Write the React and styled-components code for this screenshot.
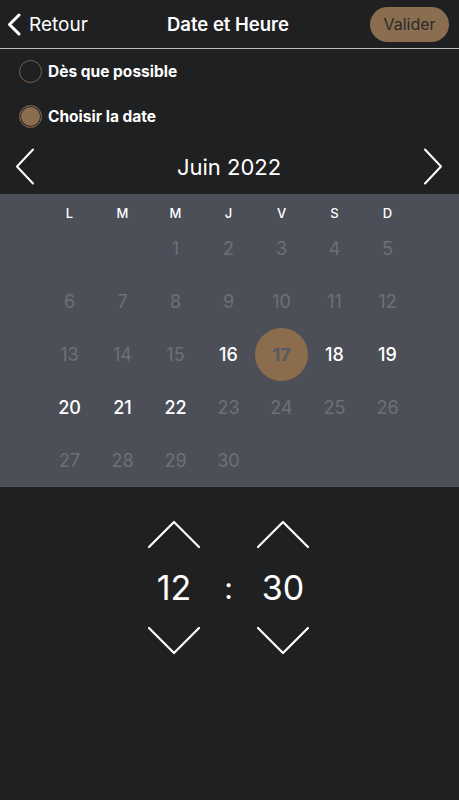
import React from 'react'
import styled, { createGlobalStyle } from 'styled-components'

const GlobalStyle = createGlobalStyle`
  html, body {
    margin: 0;
    padding: 0;
    background: #1f2022;
  }
  body {
    font-family: Inter, "Noto Sans", "Liberation Sans", sans-serif;
    color: #fff;
  }
`

const Screen = styled.div`
  width: 459px;
  height: 800px;
  background: #1f2022;
  display: flex;
  flex-direction: column;
`

const Header = styled.header`
  height: 48px;
  display: grid;
  grid-template-columns: 1fr auto 1fr;
  align-items: center;
  padding: 0 10px 0 7px;
  border-bottom: 1px solid #b9b9bb;
`

const BackButton = styled.div`
  display: flex;
  align-items: center;
  gap: 8px;
  font-size: 19px;
  color: #fff;
`

const Title = styled.h1`
  margin: 0;
  font-size: 18.5px;
  font-weight: 600;
  color: #fff;
`

const ValidateButton = styled.button`
  justify-self: end;
  width: 79px;
  height: 35px;
  padding: 0;
  border: none;
  border-radius: 18px;
  background: #8b6d4f;
  color: #2a2a2a;
  font-family: inherit;
  font-size: 16px;
`

const Options = styled.div`
  display: flex;
  flex-direction: column;
  padding: 0 19px;
`

const OptionRow = styled.label`
  height: 45px;
  display: flex;
  align-items: center;
  gap: 6px;
  font-size: 15.5px;
  font-weight: 700;
  color: #fff;
`

const Radio = styled.span`
  width: 23px;
  height: 23px;
  box-sizing: border-box;
  border-radius: 50%;
  border: 1.5px solid #7d6147;
  background: ${p => (p.$checked ? '#8b6d4f' : 'transparent')};
  box-shadow: ${p => (p.$checked ? 'inset 0 0 0 1px #1f2022' : 'none')};
`

const MonthNav = styled.div`
  height: 55px;
  display: flex;
  align-items: center;
  justify-content: space-between;
  padding: 0 16px 0 15px;
`

const MonthLabel = styled.div`
  font-size: 22px;
  color: #fff;
`

const Calendar = styled.div`
  background: #4c4f57;
  padding: 11px 0 0 43px;
  height: 293px;
  box-sizing: border-box;
`

const Grid = styled.div`
  display: grid;
  grid-template-columns: repeat(7, 53px);
  grid-auto-rows: 53px;
`

const WeekRow = styled.div`
  display: grid;
  grid-template-columns: repeat(7, 53px);
`

const WeekDay = styled.div`
  height: 17px;
  font-size: 13px;
  font-weight: 500;
  color: #fff;
  text-align: center;
  line-height: 17px;
`

const Day = styled.div`
  display: flex;
  align-items: center;
  justify-content: center;
  font-size: 18px;
  color: ${p => (p.$active ? '#ffffff' : '#6d7078')};
  font-weight: ${p => (p.$active ? 500 : 400)};
`

const Selected = styled.div`
  width: 53px;
  height: 53px;
  border-radius: 50%;
  background: #8b6c4c;
  color: #565a62;
  font-size: 18px;
  font-weight: 700;
  display: flex;
  align-items: center;
  justify-content: center;
`

const TimePicker = styled.div`
  display: flex;
  justify-content: center;
  align-items: center;
  padding: 32px 2px 0 0;
`

const TimeColumn = styled.div`
  width: 60px;
  display: flex;
  flex-direction: column;
  align-items: center;
`

const TimeValue = styled.div`
  font-size: 34px;
  line-height: 40px;
  margin: 19px 0 18px;
  color: #fff;
`

const Colon = styled.div`
  width: 49px;
  text-align: center;
  font-size: 30px;
  color: #fff;
`

const Chevron = ({ dir }) => {
  const pts = dir === 'up' ? '2,28 27,3 52,28' : '2,2 27,27 52,2'
  return (
    <svg width="54" height="30" viewBox="0 0 54 30">
      <polyline points={pts} fill="none" stroke="#fff" strokeWidth="2.2" strokeLinecap="round" strokeLinejoin="round" />
    </svg>
  )
}

const SideArrow = ({ dir }) => (
  <svg width="20" height="37" viewBox="0 0 20 37">
    <polyline
      points={dir === 'left' ? '18,1.5 2,18.5 18,35.5' : '2,1.5 18,18.5 2,35.5'}
      fill="none"
      stroke="#fff"
      strokeWidth="2"
      strokeLinecap="round"
      strokeLinejoin="round"
    />
  </svg>
)

const weekDays = ['L', 'M', 'M', 'J', 'V', 'S', 'D']
const active = [16, 18, 19, 20, 21, 22]

function App() {
  const cells = [null, null]
  for (let d = 1; d <= 30; d++) cells.push(d)

  return (
    <Screen>
      <GlobalStyle />
      <Header>
        <BackButton>
          <svg width="14" height="23" viewBox="0 0 14 23">
            <polyline points="12,2 2.5,11.5 12,21" fill="none" stroke="#fff" strokeWidth="3" strokeLinecap="round" strokeLinejoin="round" />
          </svg>
          Retour
        </BackButton>
        <Title>Date et Heure</Title>
        <ValidateButton>Valider</ValidateButton>
      </Header>

      <Options>
        <OptionRow>
          <Radio />
          Dès que possible
        </OptionRow>
        <OptionRow>
          <Radio $checked />
          Choisir la date
        </OptionRow>
      </Options>

      <MonthNav>
        <SideArrow dir="left" />
        <MonthLabel>Juin 2022</MonthLabel>
        <SideArrow dir="right" />
      </MonthNav>

      <Calendar>
        <WeekRow>
          {weekDays.map((w, i) => (
            <WeekDay key={i}>{w}</WeekDay>
          ))}
        </WeekRow>
        <Grid>
          {cells.map((d, i) =>
            d === 17 ? (
              <Day key={i}>
                <Selected>17</Selected>
              </Day>
            ) : (
              <Day key={i} $active={active.includes(d)}>
                {d}
              </Day>
            )
          )}
        </Grid>
      </Calendar>

      <TimePicker>
        <TimeColumn>
          <Chevron dir="up" />
          <TimeValue>12</TimeValue>
          <Chevron dir="down" />
        </TimeColumn>
        <Colon>:</Colon>
        <TimeColumn>
          <Chevron dir="up" />
          <TimeValue>30</TimeValue>
          <Chevron dir="down" />
        </TimeColumn>
      </TimePicker>
    </Screen>
  )
}

export default App
